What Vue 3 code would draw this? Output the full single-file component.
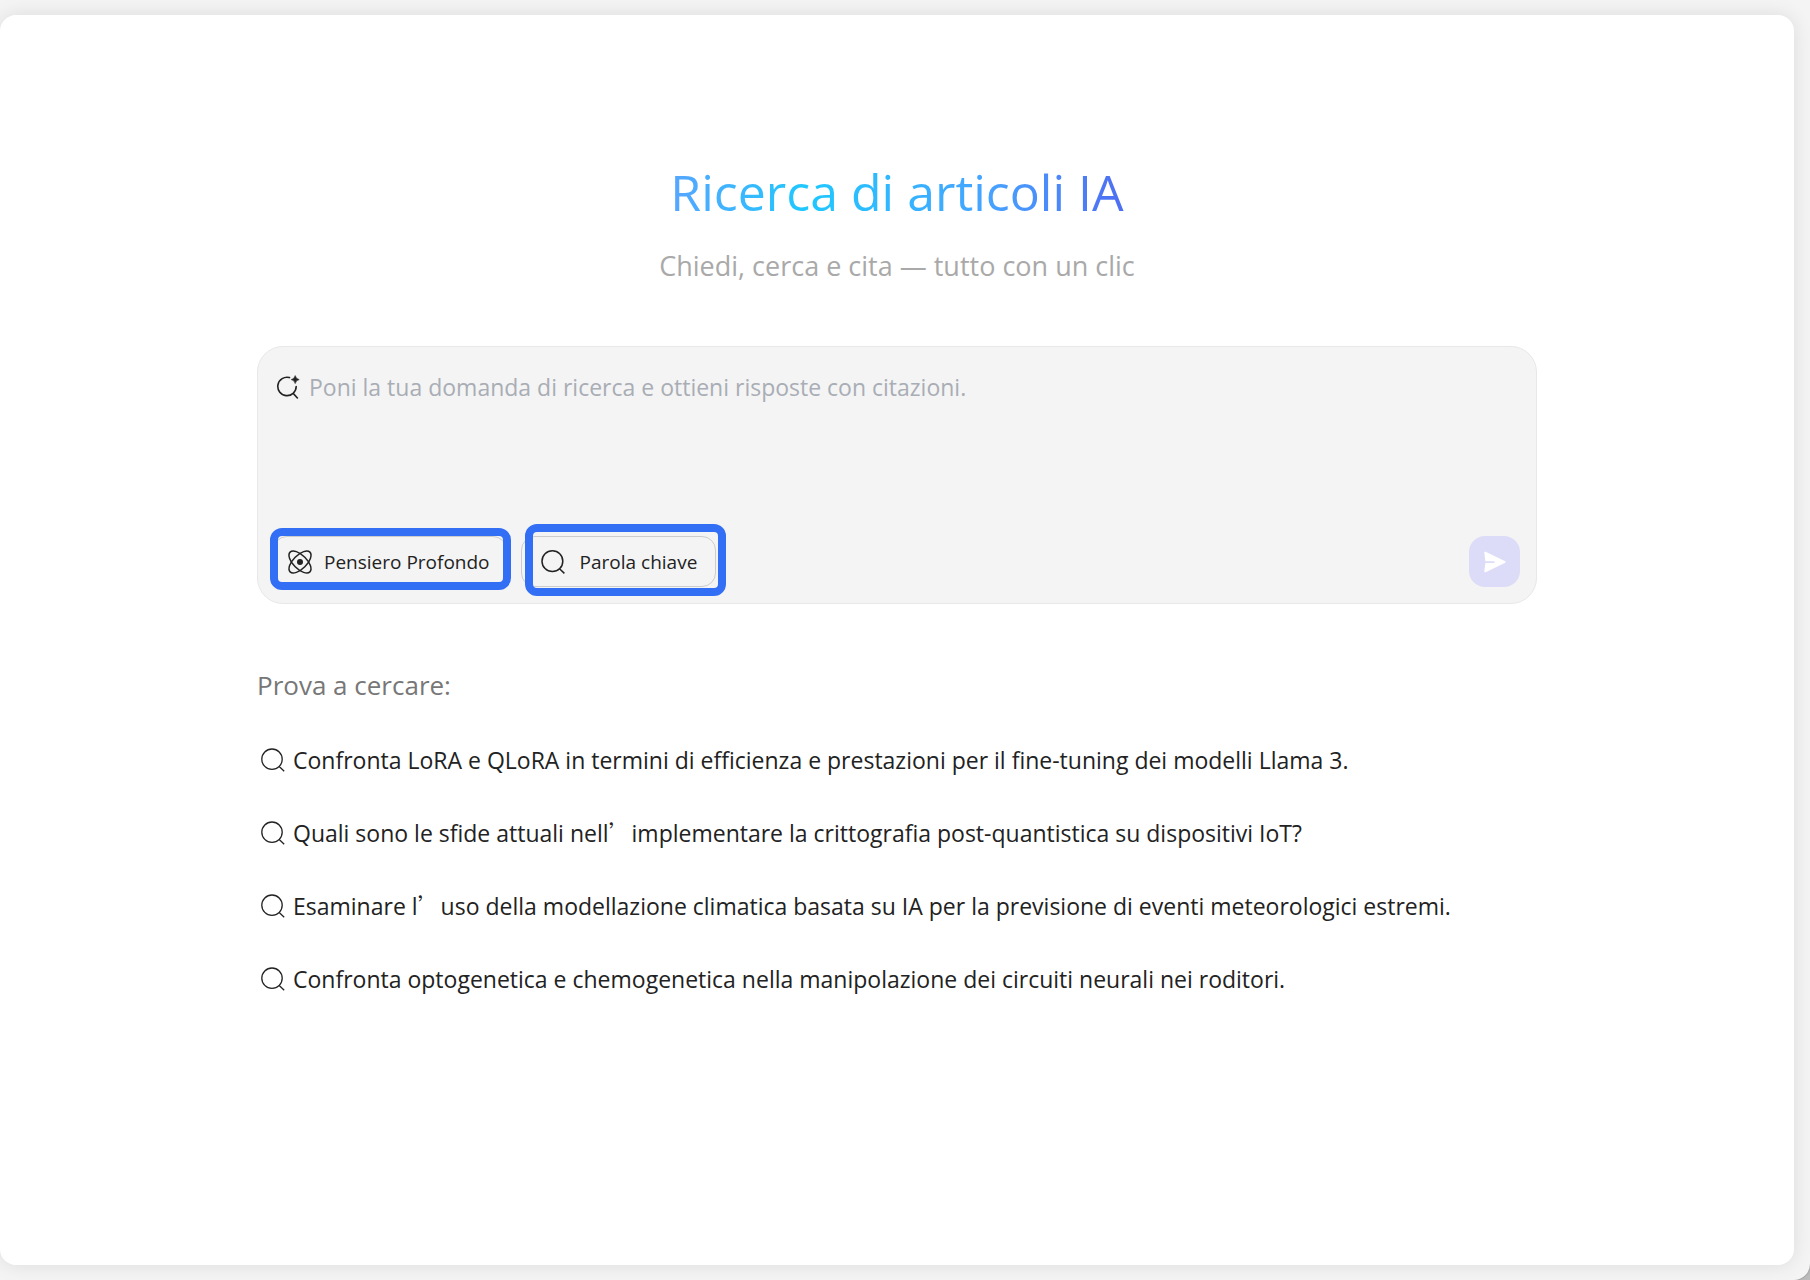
<script setup>
import { ref } from 'vue'

const question = ref('')
const suggestions = ref([
  ['Confronta LoRA e QLoRA in termini di efficienza e prestazioni per il fine-tuning dei modelli Llama 3.'],
  ['Quali sono le sfide attuali nell', 'implementare la crittografia post-quantistica su dispositivi IoT?'],
  ['Esaminare l', 'uso della modellazione climatica basata su IA per la previsione di eventi meteorologici estremi.'],
  ['Confronta optogenetica e chemogenetica nella manipolazione dei circuiti neurali nei roditori.']
])

function pick(parts) {
  question.value = parts.join('’')
}
</script>

<template>
  <div class="page">
    <main class="panel">
      <div class="content">
        <h1>Ricerca di articoli IA</h1>
        <p class="subtitle">Chiedi, cerca e cita — tutto con un clic</p>

        <form class="composer" @submit.prevent>
          <div class="field">
            <svg class="field-icon" viewBox="0 0 24 24" aria-hidden="true">
              <path d="M13.5 2.6A9.2 9.2 0 1 0 20.2 11.6M17.2 18.4L21.4 23" fill="none" stroke="#222" stroke-width="1.6" stroke-linecap="round" />
              <path d="M19.2 0.6Q20 4 23.2 4.6Q20 5.2 19.2 8.6Q18.4 5.2 15.2 4.6Q18.4 4 19.2 0.6Z" fill="#222" stroke="#222" stroke-width="0.6" stroke-linejoin="round" />
            </svg>
            <textarea
              v-model="question"
              aria-label="Domanda di ricerca"
              placeholder="Poni la tua domanda di ricerca e ottieni risposte con citazioni."
            ></textarea>
          </div>

          <div class="toolbar">
            <button type="button" class="mode deep">
              <svg viewBox="0 0 24 24" aria-hidden="true">
                <g fill="none" stroke="#222" stroke-width="1.5">
                  <ellipse cx="12" cy="12" rx="14" ry="6.8" transform="rotate(45 12 12)" />
                  <ellipse cx="12" cy="12" rx="14" ry="6.8" transform="rotate(-45 12 12)" />
                </g>
                <circle cx="12" cy="12" r="3" fill="#222" />
              </svg>
              Pensiero Profondo
            </button>
            <button type="button" class="mode keyword">
              <svg viewBox="0 0 24 24" aria-hidden="true">
                <path d="M21.8 11.2A10.4 10.4 0 1 1 1 11.2A10.4 10.4 0 1 1 21.8 11.2ZM18.5 18.8L23.4 23.4" fill="none" stroke="#222" stroke-width="1.5" />
              </svg>
              Parola chiave
            </button>
            <button type="submit" class="send" aria-label="Invia">
              <svg viewBox="0 0 24 24" aria-hidden="true">
                <path d="M2.6 1.8L22.2 11.2Q23.2 12 22.2 12.8L2.6 22.2Q1.2 22.6 1.3 21.2L2.4 13H11.5V11.2H2.4L1.3 2.8Q1.2 1.4 2.6 1.8Z" fill="#fff" />
              </svg>
            </button>
          </div>
        </form>

        <h2>Prova a cercare:</h2>
        <ul class="suggestions">
          <li v-for="parts in suggestions" :key="parts[0]">
            <button type="button" @click="pick(parts)">
              <svg viewBox="0 0 24 24" aria-hidden="true">
                <path d="M21.2 11.2A10.2 10.2 0 1 1 0.8 11.2A10.2 10.2 0 1 1 21.2 11.2ZM18.2 18.6L23.2 23.2" fill="none" stroke="#222" stroke-width="1.3" />
              </svg>
              <span>{{ parts[0] }}<template v-if="parts[1]"><span class="apostrophe">’</span>{{ parts[1] }}</template></span>
            </button>
          </li>
        </ul>
      </div>
    </main>
  </div>
</template>

<style>
body {
  background: #bbb;
}
</style>

<style scoped>
* {
  box-sizing: border-box;
}

.page {
  display: flex;
  min-height: 100vh;
  padding: 15px 16px 15px 0;
  background: #f4f4f4;
  border-radius: 0 0 16px 0;
  box-shadow: 0 0 2px #777;
  font-family: "Open Sans", "Noto Sans CJK SC", sans-serif;
  color: #222;
}

.panel {
  flex: 1;
  padding: 147px 32px 64px;
  background: #fff;
  border-radius: 16px;
  box-shadow: 0 0 20px rgba(0, 0, 0, 0.1);
}

.content {
  max-width: 1280px;
  margin: 0 auto;
}

h1 {
  width: fit-content;
  margin: 0 auto;
  font-size: 50px;
  font-weight: 400;
  line-height: 60px;
  color: transparent;
  background: linear-gradient(90deg, #57a5ff 0%, #1fc8ff 30%, #47a3ff 70%, #4e6ef2 100%);
  background-clip: text;
}

.subtitle {
  margin: 26px 0 62px;
  font-size: 27px;
  line-height: 36px;
  text-align: center;
  color: #a9a9a9;
}

.composer {
  display: flex;
  flex-direction: column;
  padding: 20px 16px 16px 15px;
  background: #f4f4f4;
  border: 1px solid #e8e8e8;
  border-radius: 26px;
}

.field {
  display: flex;
  gap: 9px;
  padding-left: 3px;
}

.field-icon {
  flex: none;
  width: 24px;
  height: 24px;
  margin-top: 8px;
}

textarea {
  flex: 1;
  height: 154px;
  padding: 4px 0;
  border: 0;
  outline: none;
  resize: none;
  background: transparent;
  font: inherit;
  font-size: 23px;
  line-height: 32px;
  color: #222;
}

textarea::placeholder {
  color: #a9adb5;
  opacity: 1;
}

.toolbar {
  display: flex;
  gap: 14px;
  margin-top: 15px;
}

.mode {
  position: relative;
  display: flex;
  align-items: center;
  height: 51px;
  border: 1px solid #ccc;
  border-radius: 14px;
  background: #f4f4f4;
  font: inherit;
  font-size: 19px;
  color: #222;
  cursor: pointer;
}

.deep {
  gap: 12px;
  padding: 0 16px 0 14px;
}

.keyword {
  gap: 15px;
  padding: 0 18px 0 19px;
}

.mode svg {
  width: 24px;
  height: 24px;
  overflow: visible;
}

/* blue frames around the two search modes */
.mode::after {
  content: "";
  position: absolute;
  border: 8px solid #336ff5;
  border-radius: 12px;
}

.deep::after {
  inset: -9px -5px -4px -4px;
}

.keyword::after {
  inset: -13px -11px -10px 3px;
}

.send {
  display: grid;
  place-items: center;
  width: 51px;
  height: 51px;
  margin-left: auto;
  padding: 0;
  border: 0;
  border-radius: 16px;
  background: #dcdcf8;
  cursor: pointer;
}

.send svg {
  width: 24px;
  height: 24px;
}

h2 {
  margin: 63px 0 39px;
  font-size: 26px;
  font-weight: 400;
  line-height: 36px;
  color: #777;
}

.suggestions {
  display: grid;
  gap: 37px;
  margin: 0;
  padding: 0;
  list-style: none;
}

.suggestions button {
  display: flex;
  align-items: center;
  gap: 8px;
  padding: 0 0 0 4px;
  border: 0;
  background: none;
  font: inherit;
  font-size: 23px;
  line-height: 36px;
  text-align: left;
  color: #222;
  cursor: pointer;
}

.suggestions svg {
  flex: none;
  width: 24px;
  height: 24px;
}

.apostrophe {
  font-family: "Noto Sans CJK SC", sans-serif;
  font-weight: 300;
  line-height: 1;
}
</style>
